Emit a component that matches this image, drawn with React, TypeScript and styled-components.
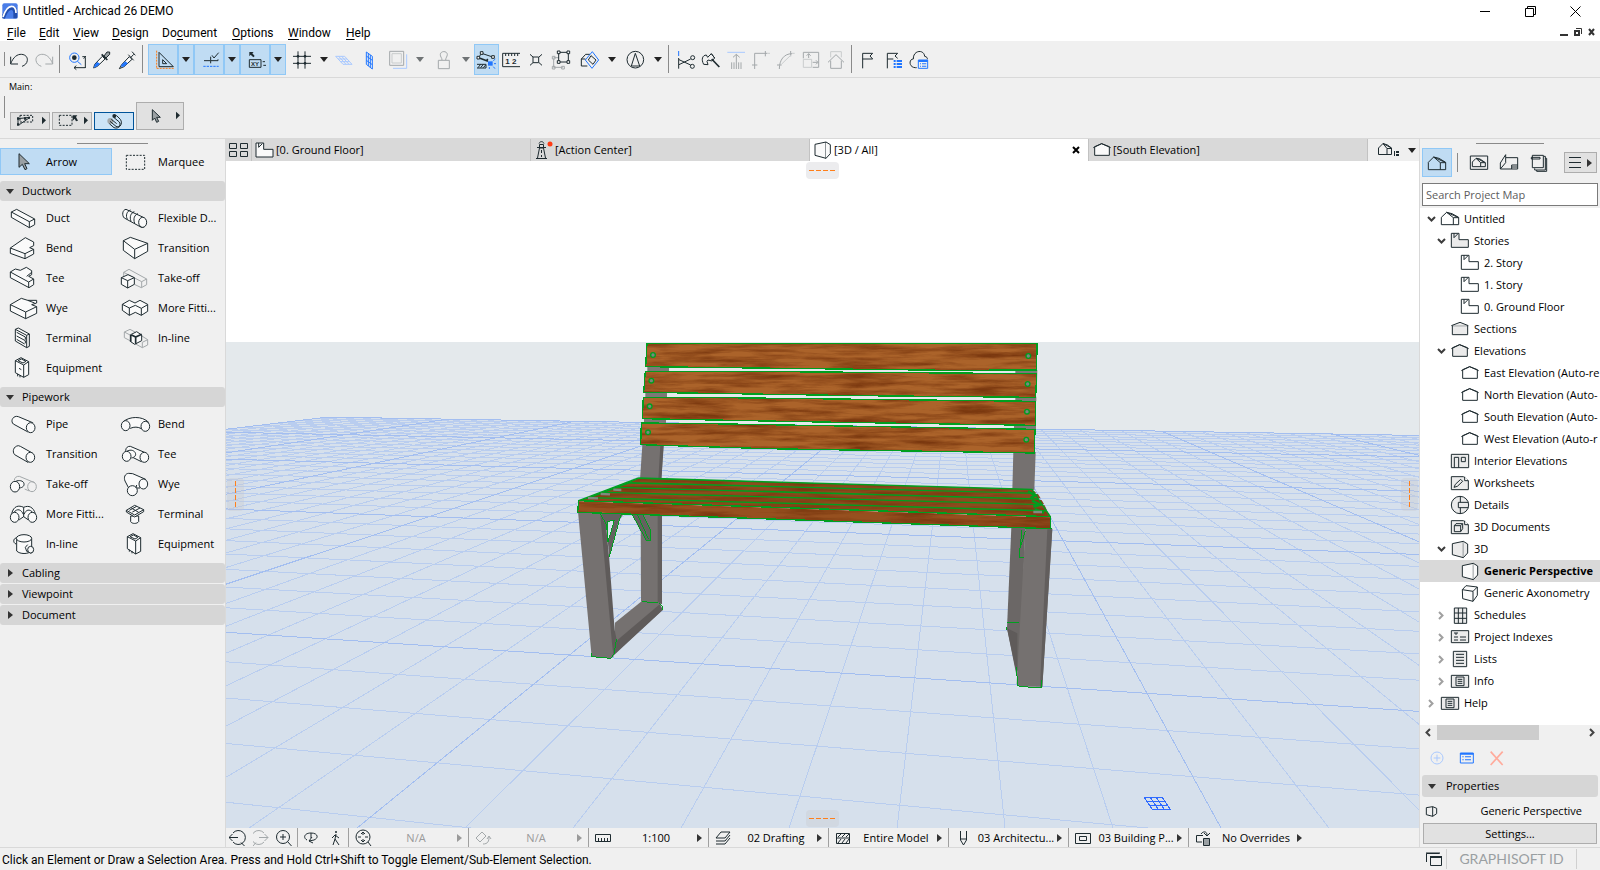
import React from "react";
import styled, { createGlobalStyle, css } from "styled-components";

const INK = "#1e2b30";
const BLUE = "#2176ff";
const GRAY = "#a3a8aa";
const PALE = "#a9c9ff";
const EDGE = "#009f1f";

const GlobalStyle = createGlobalStyle`
  *, *::before, *::after { box-sizing: border-box; }
  body { margin: 0; }
  button, input { font: inherit; color: inherit; margin: 0; }
`;

/* ---------- icon drawing ---------- */

type Stroke = [d: string, kind?: string];

const KINDS: Record<string, React.SVGProps<SVGPathElement>> = {
  k: { stroke: INK, fill: "none" },
  w: { stroke: INK, fill: "#fafafa" },
  e: { stroke: INK, fill: "#ebebeb" },
  K: { fill: INK },
  t: { stroke: INK, strokeWidth: 5, fill: "none" },
  g: { stroke: GRAY, fill: "none" },
  G: { fill: GRAY },
  l: { stroke: "#c9cccd", fill: "none" },
  b: { stroke: BLUE, fill: "none" },
  B: { fill: BLUE },
  p: { stroke: PALE, fill: "none" },
  o: { stroke: "#ff7a0f", fill: "none", strokeDasharray: "6 3" },
  d: { stroke: INK, fill: "none", strokeDasharray: "6 4" },
  D: { stroke: BLUE, fill: "none", strokeDasharray: "7 3" },
  r: { stroke: "#ffab9c", strokeWidth: 5, fill: "none" },
  c: { stroke: INK, fill: "#9aa0a3" },
};

type ArtProps = {
  at: [number, number];
  size: [number, number];
  lines: Stroke[];
  unit?: number;
  children?: React.ReactNode;
};

/* Icons are drawn on a fine grid, three units to the pixel by default. */
const Art = ({ at, size, lines, unit = 3, children }: ArtProps) => (
  <svg
    width={size[0]}
    height={size[1]}
    viewBox={`${at[0]} ${at[1]} ${size[0] * unit} ${size[1] * unit}`}
    strokeWidth={unit}
    aria-hidden="true"
  >
    {lines.map(([d, kind = "k"], i) => (
      <path key={i} d={d} {...KINDS[kind]} />
    ))}
    {children}
  </svg>
);

const disc = (x: number, y: number, rx: number, ry = rx) =>
  `M${x - rx} ${y}a${rx} ${ry} 0 1 0 ${rx * 2} 0a${rx} ${ry} 0 1 0 ${-rx * 2} 0Z`;
const box = (x: number, y: number, w: number, h: number) => `M${x} ${y}h${w}v${h}h${-w}Z`;

const Down = ({ color = "#222" }: { color?: string }) => (
  <svg width="8" height="5" viewBox="0 0 8 5" aria-hidden="true">
    <path d="M0 0h8L4 5z" fill={color} />
  </svg>
);
const Right = ({ color = "#333" }: { color?: string }) => (
  <svg width="5" height="8" viewBox="0 0 5 8" aria-hidden="true">
    <path d="M0 0v8l5-4z" fill={color} />
  </svg>
);

/* ---------- frame ---------- */

const Frame = styled.div`
  display: flex;
  flex-direction: column;
  height: 100vh;
  min-height: 640px;
  overflow: hidden;
  background: #f0f0f0;
  color: #000;
  font: 12px/16px Roboto, "Noto Sans", sans-serif;
  svg { display: block; flex: none; }
`;

const TitleBar = styled.header`
  display: flex;
  align-items: center;
  height: 22px;
  padding: 0 19px 0 2px;
  gap: 5px;
  background: #fff;
  h1 { margin: 0; flex: 1; font-size: 12px; font-weight: 400; line-height: 16px; }
`;

const WindowButtons = styled.div<{ $gap: number }>`
  display: flex;
  align-items: center;
  gap: ${(p) => p.$gap}px;
`;

const PlainButton = styled.button`
  display: flex;
  align-items: center;
  justify-content: center;
  padding: 0;
  border: 0;
  background: none;
`;

const MenuBar = styled.nav`
  display: flex;
  align-items: center;
  height: 19px;
  padding-right: 4px;
  background: #fff;
`;

const MenuItems = styled.div`
  display: flex;
  flex: 1;
`;

const MenuButton = styled(PlainButton)<{ $w: number }>`
  width: ${(p) => p.$w}px;
  padding: 4px 0 0 7px;
  justify-content: flex-start;
  line-height: 17px;
  u { text-underline-offset: 2px; }
`;

const Toolbar = styled.div`
  display: flex;
  align-items: center;
  height: 37px;
  padding-left: 4px;
  border-bottom: 1px solid #d9d9d9;
`;

const Grip = styled.span<{ $h: number }>`
  width: 1px;
  height: ${(p) => p.$h}px;
  margin-right: 1px;
  background: #8a8a8a;
`;

const Divider = styled.span<{ $l: number; $r: number; $h?: number }>`
  width: 1px;
  height: ${(p) => p.$h ?? 28}px;
  margin: 0 ${(p) => p.$r}px 0 ${(p) => p.$l}px;
  background: #8a8a8a;
`;

const active = css`
  background: #c0dcf3;
  box-shadow: inset 0 0 0 1px #90c8f6;
`;

const Tool = styled(PlainButton)<{ $on?: boolean }>`
  height: 31px;
  ${(p) => p.$on && active}
`;

const ToolArrow = styled(Tool)`
  width: 16px;
`;

const MainRow = styled.section`
  display: flex;
  flex-direction: column;
  height: 61px;
  padding: 2px 4px 0;
  border-bottom: 1px solid #d9d9d9;
  h2 { margin: 0 0 0 5px; font: 9px/14px "Open Sans", sans-serif; }
`;

const MainTools = styled.div`
  display: flex;
  align-items: flex-end;
  gap: 2px;
  height: 36px;
`;

const MainGrip = styled(Grip)`
  align-self: flex-start;
  margin: 2px 3px 0 0;
`;

const MainButton = styled(PlainButton)<{ $big?: boolean; $on?: boolean }>`
  width: ${(p) => (p.$big ? 48 : 40)}px;
  height: ${(p) => (p.$big ? 28 : 18)}px;
  border: 1px solid ${(p) => (p.$on ? "#00549a" : "#adadad")};
  background: ${(p) => (p.$on ? "#cce4f7" : "#e1e1e1")};
  svg { margin: -1px; }
`;

const Body = styled.div`
  display: flex;
  flex: 1;
  min-height: 0;
  font: 11px/16px "Open Sans", "Noto Sans", sans-serif;
`;

/* ---------- left palette ---------- */

const Toolbox = styled.aside`
  width: 226px;
  flex: none;
  padding-top: 4px;
  border-right: 1px solid #d9d9d9;
`;

const PanelGrip = styled.div<{ $w: number }>`
  width: ${(p) => p.$w}px;
  height: 1px;
  margin: 0 auto 4px;
  background: #8a8a8a;
`;

const PairGrid = styled.div<{ $top?: boolean }>`
  display: grid;
  grid-template-columns: 112px 113px;
  grid-auto-rows: ${(p) => (p.$top ? 27 : 30)}px;
  margin: ${(p) => (p.$top ? "0 0 6px" : "2px 0 4px")};
`;

const ElementButton = styled(PlainButton)<{ $on?: boolean }>`
  justify-content: flex-start;
  white-space: nowrap;
  ${(p) => p.$on && active}
`;

const GroupHeader = styled.button<{ $h?: number }>`
  display: flex;
  align-items: center;
  width: 100%;
  height: ${(p) => p.$h ?? 20}px;
  margin: 0 0 1px;
  padding: 0;
  border: 0;
  border-radius: 3px;
  background: #d6d6d6;
`;

const HeaderMark = styled.span`
  display: flex;
  justify-content: center;
  width: 20px;
  margin-right: 2px;
`;

/* ---------- centre ---------- */

const Centre = styled.main`
  display: flex;
  flex-direction: column;
  flex: 1;
  min-width: 0;
`;

const TabBar = styled.div`
  display: flex;
  height: 22px;
  flex: none;
  background: #d9d9d9;
`;

const GridTab = styled(PlainButton)`
  width: 26px;
  border-right: 1px solid #c2c2c2;
`;

const Tab = styled.button<{ $on?: boolean }>`
  display: flex;
  align-items: center;
  flex: 1;
  min-width: 0;
  padding: 0;
  border: 0;
  border-right: 1px solid #c2c2c2;
  background: ${(p) => (p.$on ? "#fff" : "#d9d9d9")};
  text-align: left;
  span { flex: 1; }
`;

const TabMore = styled(PlainButton)`
  width: 51px;
  padding-left: 6px;
  gap: 8px;
  background: #efefef;
`;

const Viewport = styled.div`
  position: relative;
  flex: 1;
  min-height: 0;
  > svg { width: 100%; height: 100%; }
`;

const Handle = styled.span<{ $side: "top" | "bottom" | "left" | "right" }>`
  position: absolute;
  display: flex;
  align-items: center;
  justify-content: center;
  border-radius: 4px;
  background: rgba(200, 200, 205, 0.35);
  ${(p) =>
    p.$side === "top" || p.$side === "bottom"
      ? css`width: 33px; height: 17px; left: 0; right: 0; margin: 0 auto; ${p.$side}: 1px;`
      : css`width: 17px; height: 33px; top: 0; bottom: 0; margin: auto 0; ${p.$side}: 1px;`}
  &::after {
    content: "";
    ${(p) =>
      p.$side === "top" || p.$side === "bottom"
        ? css`width: 27px; height: 1px; background: repeating-linear-gradient(90deg, #ff7f1a 0 5px, transparent 5px 7px);`
        : css`width: 1px; height: 27px; background: repeating-linear-gradient(180deg, #ff7f1a 0 5px, transparent 5px 7px);`}
  }
`;

const ViewBar = styled.div`
  display: flex;
  height: 19px;
  flex: none;
`;

const ViewCell = styled.div<{ $w: number }>`
  display: flex;
  align-items: center;
  width: ${(p) => p.$w}px;
  border-right: 1px solid #a0a0a0;
`;

const ViewButton = styled(PlainButton)`
  flex: 1;
  height: 19px;
`;

const Option = styled(PlainButton)<{ $off?: boolean }>`
  width: 120px;
  height: 19px;
  justify-content: flex-start;
  padding-left: 5px;
  border-right: 1px solid #a0a0a0;
  color: ${(p) => (p.$off ? "#9a9a9a" : "#000")};
  white-space: nowrap;
  &:last-child { border-right: 0; }
  span { width: 82px; margin-left: 3px; text-align: center; }
`;

/* ---------- navigator ---------- */

const Navigator = styled.aside`
  display: flex;
  flex-direction: column;
  width: 181px;
  flex: none;
  padding-top: 4px;
  border-left: 1px solid #d9d9d9;
`;

const NavTools = styled.div`
  display: flex;
  align-items: center;
  height: 29px;
  margin-bottom: 6px;
  padding: 0 3px 0 2px;
`;

const NavTool = styled(PlainButton)<{ $on?: boolean }>`
  height: 29px;
  ${(p) => p.$on && active}
`;

const NavMenu = styled(PlainButton)`
  width: 33px;
  height: 21px;
  margin-left: auto;
  gap: 6px;
  border: 1px solid #adadad;
  background: #e1e1e1;
`;

const SearchBox = styled.input`
  height: 23px;
  margin: 0 2px 2px;
  padding: 0 3px;
  border: 1px solid #7a7a7a;
  border-radius: 0;
  background: #fff;
  outline: 0;
  &::placeholder { color: #5c5c5c; opacity: 1; }
`;

const Tree = styled.ul`
  flex: 1;
  margin: 0;
  padding: 0;
  min-height: 0;
  overflow: hidden;
  background: #fff;
  list-style: none;
`;

const TreeRow = styled.li<{ $level: number; $on?: boolean }>`
  display: flex;
  align-items: center;
  height: 22px;
  padding-left: ${(p) => 4 + p.$level * 10}px;
  white-space: nowrap;
  background: ${(p) => (p.$on ? "#d9d9d9" : "none")};
  font-weight: ${(p) => (p.$on ? 700 : 400)};
`;

const Expander = styled.span`
  display: flex;
  flex: none;
  justify-content: center;
  width: 14px;
  margin-right: 2px;
`;

const TreeLabel = styled.span`
  margin-left: 2px;
`;

const ScrollTrack = styled.div`
  display: flex;
  align-items: center;
  height: 15px;
  padding: 0 5px;
  justify-content: space-between;
`;

const ScrollThumb = styled.span`
  height: 15px;
  width: 102px;
  margin-right: auto;
  margin-left: 6px;
  background: #cdcdcd;
`;

const NavActions = styled.div`
  display: flex;
  align-items: center;
  height: 35px;
  padding: 0 2px;
`;

const PropertyHeader = styled(GroupHeader)`
  width: auto;
  margin: 0 2px;
`;

const PropertyRow = styled.div`
  display: flex;
  align-items: center;
  justify-content: space-between;
  height: 26px;
  padding: 2px 18px 0 2px;
`;

const SettingsButton = styled.button`
  height: 21px;
  margin: 0 3px 3px;
  padding: 0;
  border: 1px solid #adadad;
  background: #e1e1e1;
`;

/* ---------- status ---------- */

const StatusBar = styled.footer`
  display: flex;
  align-items: center;
  height: 23px;
  flex: none;
  padding-left: 2px;
  border-top: 1px solid #d9d9d9;
  p { flex: 1; margin: 2px 0 0; white-space: nowrap; }
`;

const Brand = styled.span`
  display: flex;
  align-items: center;
  justify-content: center;
  width: 131px;
  height: 20px;
  margin: 0 23px 0 4px;
  border: solid #d0d0d0;
  border-width: 0 1px;
  color: #9a9fa2;
  font: 14px/20px Lato, sans-serif;
`;

/* ---------- toolbar data ---------- */

const undo: Stroke[] = [["M32 170V192H54"], ["M32 191C40 171 52 162 65 163c12 1 18 9 17 18c-1 9-7 15-16 18"]];
const redo: Stroke[] = [["M158 170V192H136", "g"], ["M158 191C150 171 138 162 125 163c-12 1-18 9-17 18c1 9 7 15 16 18", "g"]];
const find: Stroke[] = [
  [disc(223, 173, 14), "b"], [disc(223, 173, 7), "K"], ["M232 184l12 10", "b"],
  ["M256 204V172M247 170h11M251 176l6-7"], ["M256 203H222M229 197l-7 6l7 6"],
];
const pick: Stroke[] = [
  ["M281 204L284 193L307 169L315 177L292 199Z", "w"], ["M281 204L285 193L292 186L300 191L292 199Z", "B"],
  ["M312 168L321 156L329 156L329 163L318 174Z", "c"], ["M305 163L322 180", "t"],
];
const inject: Stroke[] = [
  ["M358 206L365 194L388 170L396 178L372 200Z", "w"], ["M362 200L366 193L376 184L383 190L372 200Z", "B"],
  ["M392 173L401 163M385 164L401 181M396 155L406 166"],
];
const setSquare: Stroke[] = [["M470 152V205", "o"], ["M470 205H524", "o"], ["M477 157V200H520Z"], ["M488 179V191H500Z"]];
const snap: Stroke[] = [["M612 182H630M632 170V190M632 182H654V178"], ["M636 166L642 174L656 158"], ["M610 199H656", "D"]];
const coords: Stroke[] = [["M748 156H761L757 160L764 168L760 172L752 164L748 169Z", "K"], [box(748, 179, 35, 23)], ["M788 185h7M790 196h8"]];
const gridTool: Stroke[] = [
  ["M879 169H933M879 190H933M894 154V206M915 154V206"],
  [disc(894, 169, 4), "K"], [disc(915, 169, 4), "K"], [disc(894, 190, 4), "K"], [disc(915, 190, 4), "K"],
];
const plane: Stroke[] = [["M1007 169H1034L1056 193H1029Z", "p"], ["M1016 169l22 24M1025 169l22 24M1014 177h27M1021 185h27", "p"]];
const wall: Stroke[] = [["M1099 156L1117 169V207L1099 193Z", "b"], ["M1105 160v38M1111 165v37M1099 168l18 13M1099 181l18 13", "b"]];
const trace: Stroke[] = [["M1220 163V205H1179", "p"], [box(1169, 154, 42, 42), "g"], [box(1176, 161, 28, 28), "l"]];
const weight: Stroke[] = [[box(1315, 181, 33, 25), "g"], ["M1326 180C1326 173 1320 170 1321 163C1322 152 1341 152 1342 163C1342 170 1337 173 1337 180", "g"]];
const suspend: Stroke[] = [
  ["M5 160L38 171M5 160L-4 172"], [box(1, 155, 8, 8), "w"], [box(35, 167, 8, 8), "w"], [box(-9, 169, 8, 8), "w"],
  ["M-9 193H18V204H-9M-6 203L2 193M2 203L10 193M10 203L17 195"], ["M0 175L24 184M24 180L20 178", "t"], [box(24, 184, 14, 13), "B"],
  ["M40 182l6-5M42 191h6M40 200l5 6M28 201v6", "b"],
];
const ruler: Stroke[] = [["M120 160H68V200H120"], ["M77 160v8M86 160v8M95 160v8M104 160v8M113 160v8"]];
const explode: Stroke[] = [[box(159, 171, 17, 17)], ["M150 163l9 8M186 163l-9 8M150 196l9-8M186 196l-9-8"]];
const group: Stroke[] = [
  ["M221 176V202H248M221 173H236", "g"], [box(217, 169, 8, 8), "g"], [box(217, 199, 8, 8), "g"], [box(245, 199, 8, 8), "g"],
  [box(236, 157, 29, 29)], [box(232, 153, 8, 8), "w"], [box(261, 153, 8, 8), "w"], [box(232, 182, 8, 8), "w"], [box(261, 182, 8, 8), "w"],
];
const cube: Stroke[] = [["M322 198H304V177L317 163H330"], ["M337 155L356 180L336 205L316 180Z", "b"], ["M304 177H316"], ["M333 167L348 180L339 193L325 180Z"]];
const compass: Stroke[] = [[disc(466, 179, 25)], ["M454 198L466 160L479 198Z"]];
const split: Stroke[] = [["M596 153V168", "b"], ["M596 174V206"], ["M597 179L632 195M597 194L632 177"], [disc(638, 173, 6)], [disc(637, 199, 6)]];
const axe: Stroke[] = [["M671 193C663 178 667 166 679 165L683 172L694 161L704 174L696 183L684 180L681 184L684 194Z"], ["M694 161L704 174"], ["M695 177L718 201", "t"]];
const lift: Stroke[] = [["M742 157H795", "p"], ["M769 207V163M759 172l10-9l10 9M755 187v20M762 187v20M776 187v20M783 187v20", "g"]];
const corner: Stroke[] = [["M824 207V160H862M856 153v16M816 195h16", "g"], ["M862 160h8", "l"]];
const fillet: Stroke[] = [["M898 207C898 180 912 161 936 161M932 153v16M891 195h14", "g"], ["M904 193L934 164M936 160h8", "l"]];
const resize: Stroke[] = [["M970 175V157H1016V202H998", "g"], [box(970, 178, 25, 24), "l"], ["M986 174V161M980 167l6-6l6 6M998 187h15M1008 181l6 6l-6 6", "g"]];
const homeTool: Stroke[] = [["M1044 187L1068 164L1092 187M1052 182V205H1084V182", "g"], ["M1052 172V155H1084V172", "l"]];
const flag: Stroke[] = [["M1148 205V160H1178L1170 168L1178 177H1148"]];
const flagList: Stroke[] = [["M1222 205V160H1253L1245 168L1253 175M1222 177H1240"], [box(1241, 180, 6, 6) + box(1250, 180, 16, 6) + box(1241, 189, 6, 6) + box(1250, 189, 16, 6) + box(1241, 198, 6, 6) + box(1250, 198, 16, 6), "B"]];
const cloud: Stroke[] = [["M1310 203H1306C1286 202 1286 177 1300 177C1299 150 1332 147 1334 169C1340 170 1343 174 1342 178"], [box(1315, 180, 28, 25), "b"], [box(1315, 180, 28, 6) + box(1320, 190, 3, 3) + box(1326, 190, 13, 3) + box(1320, 197, 3, 3) + box(1326, 197, 13, 3), "B"]];

type ToolSpec = { name: string; x: number; art: Stroke[]; menu?: boolean; on?: boolean; dim?: boolean; label?: [number, number, string, number] };
const SEP = "sep";

const TOOLS: (ToolSpec | typeof SEP)[] = [
  { name: "Undo", x: 18, art: undo },
  { name: "Redo", x: 93, art: redo },
  SEP,
  { name: "Find and select", x: 192, art: find },
  { name: "Pick up parameters", x: 267, art: pick },
  { name: "Inject parameters", x: 342, art: inject },
  SEP,
  { name: "Guide lines", x: 444, art: setSquare, menu: true, on: true },
  { name: "Snap guides", x: 582, art: snap, menu: true, on: true },
  { name: "Tracker", x: 720, art: coords, menu: true, on: true, label: [753, 197, "XY", 18] },
  { name: "Grid snap", x: 858, art: gridTool, menu: true },
  { name: "Editing plane", x: 996, art: plane },
  { name: "Vertical plane", x: 1071, art: wall },
  { name: "Trace", x: 1146, art: trace, menu: true, dim: true },
  { name: "Gravity", x: 1284, art: weight, menu: true, dim: true },
  { name: "Suspend groups", x: -18, art: suspend, on: true },
  { name: "Measure", x: 57, art: ruler, label: [76, 193, "1 2", 24] },
  { name: "Explode", x: 132, art: explode },
  { name: "Group", x: 207, art: group },
  { name: "3D cutaway", x: 282, art: cube, menu: true },
  { name: "Orientation", x: 420, art: compass, menu: true },
  SEP,
  { name: "Split", x: 582, art: split },
  { name: "Adjust", x: 657, art: axe },
  { name: "Elevate", x: 732, art: lift },
  { name: "Intersect", x: 807, art: corner },
  { name: "Fillet", x: 882, art: fillet },
  { name: "Resize", x: 957, art: resize },
  { name: "Trim to roof", x: 1032, art: homeTool },
  SEP,
  { name: "Mark up", x: 1128, art: flag },
  { name: "Issue list", x: 1203, art: flagList },
  { name: "Cloud", x: 1278, art: cloud },
];

const cursorArt: Stroke[] = [["M57 56V97L67 88L75 104L81 101L74 86L88 86Z", "c"]];

/* ---------- palette data ---------- */

type Element = { name: string; art: Stroke[] };

const DUCTS: Element[] = [
  { name: "Duct", art: [["M34 231L50 223L104 252V269L88 278L34 247Z", "w"], ["M34 231L88 260L104 252M88 260V278"]] },
  { name: "Flexible D...", art: [["M378 223C367 224 365 242 373 249L424 277C440 279 443 252 430 247Z", "w"], [disc(428, 262, 12, 15), "w"], ["M392 225C381 228 376 241 382 253M403 230C392 234 388 246 393 259M414 236C403 240 399 251 404 265"]] },
  { name: "Bend", art: [["M31 339L76 308L101 321V332L89 338L101 343V357L75 371L31 355Z", "w"], ["M31 339L75 356L101 343M75 356V371"]] },
  { name: "Transition", art: [["M370 317L391 307L443 325V349L404 371L370 346Z", "w"], ["M370 317L404 343L443 325M404 343V371"]] },
  { name: "Tee", art: [["M31 411L46 402L61 406L79 397L95 407V419L86 424L101 432V449L87 458L31 428Z", "w"], ["M31 411L86 441L101 432M86 441V458M80 424L95 412"]] },
  { name: "Take-off", art: [["M371 425V412L387 403L440 432V449L424 458L403 448M371 412L425 440L440 432M425 440V458", "g"], ["M364 428L384 419L403 428V448L383 459L364 448Z", "w"], ["M364 428L383 437L403 428M383 437V459"]] },
  { name: "Wye", art: [["M31 509L64 490L83 496L110 496V504L95 509L110 515V535L77 551L31 528Z", "w"], ["M31 509L77 531L110 515M77 531V551M83 496L104 504"]] },
  { name: "More Fitti...", art: [["M367 508L388 496L405 504L420 496L443 508V529L424 541L406 532L388 541L367 526Z", "w"], ["M367 508L388 519L406 511L424 520L443 509M388 519V541M424 520V541"]] },
  { name: "Terminal", art: [["M46 583L55 579L88 597V634L80 638L46 618Z", "w"], ["M46 583L80 601V638M80 601L88 597M50 592L76 606V614M50 603L76 617V625M50 613L74 627"]] },
  { name: "In-line", art: [["M373 591L390 583L410 594M373 591V608L392 618M373 591L392 601M424 602L443 614V630L427 638L405 626M427 638V622L443 614", "g"], ["M392 599L410 590L425 600V617L404 628L392 620Z", "w"], ["M392 599V620M395 600L407 606L425 598M407 606V626", "t"]] },
  { name: "Equipment", art: [["M46 677L63 668L86 680V719L71 727L46 713Z", "w"], ["M46 677L71 690L86 680M71 690V727M54 677L64 672L78 679L69 684ZM57 700L64 704M53 717V724M60 720V727"]] },
];

const PIPES: Element[] = [
  { name: "Pipe", art: [["M50 94C36 95 32 110 40 117L84 141L98 113L55 95Z", "w"], [disc(92, 128, 13, 15), "w"]] },
  { name: "Bend", art: [["M370 110C388 94 426 92 446 112L424 131C414 125 402 125 391 130Z", "w"], [disc(377, 122, 13, 15), "w"], [disc(436, 124, 13, 15), "w"]] },
  { name: "Transition", art: [["M55 182C40 184 36 200 44 209L84 232L97 204L61 184Z", "w"], [disc(91, 217, 13, 15), "w"]] },
  { name: "Tee", art: [["M377 197C377 188 384 183 391 184L438 204L424 230L400 218Z", "w"], ["M380 199C388 194 400 194 405 202C410 210 405 217 394 219", "w"], [disc(380, 214, 13, 15), "w"], [disc(433, 217, 13, 15), "w"]] },
  { name: "Take-off", art: [["M43 286C43 278 50 273 58 274L104 293M88 318L74 312", "g"], [disc(96, 305, 13, 15), "g"], ["M44 291C52 285 66 285 71 293C75 302 68 308 58 309", "w"], [disc(45, 305, 14, 16), "w"]] },
  { name: "Wye", art: [["M386 265C374 266 371 278 375 288L386 309L410 309L420 309L437 283L398 266Z", "w"], [disc(430, 297, 13, 15), "w"], [disc(397, 317, 15, 15), "w"], ["M408 308L410 300"]] },
  { name: "More Fitti...", art: [["M35 386C41 362 56 360 71 367C86 360 100 366 106 386L84 404L71 395L58 404Z", "w"], ["M71 367V396M41 383C52 368 64 374 70 388M72 388C78 374 88 370 100 384"], [disc(44, 397, 13, 15), "w"], [disc(97, 397, 13, 15), "w"]] },
  { name: "Terminal", art: [["M392 393V410C396 417 411 417 416 410V393Z", "w"], ["M379 376L404 361L431 374V380L404 396L379 381Z", "w"], ["M379 376L404 390L431 374M388 376L410 364M397 381L420 369M394 369L416 382"]] },
  { name: "In-line", art: [["M48 459C39 461 39 474 48 477", "w"], ["M50 461V498C60 508 84 508 95 498V461Z", "w"], [disc(72, 460, 23, 11), "w"], ["M83 479L76 487L80 499L94 505", "w"], [disc(92, 494, 9, 10), "w"]] },
  { name: "Equipment", art: [["M382 455L399 446L422 458V499L407 507L382 491Z", "w"], ["M382 455L407 468L422 458M407 468V507M390 455L400 450L414 457L405 462ZM388 494V500M396 498V505"]] },
];

/* ---------- navigator data ---------- */

const houseArt: Stroke[] = [["M334 674V652L350 637L366 641L386 652V674Z"], ["M350 637L370 653M370 674V653H386M350 637L384 652"]];
const page = (kind: string): Stroke[] => [["M394 766H417V785H445V808H394Z", kind], ["M402 766V779L413 768"]];
const gable = (kind: string): Stroke[] => [["M188 119V145H232V119L209 110Z", kind], ["M184 122L209 110L236 122"]];
const persp = (kind: string): Stroke[] => [["M157 641L190 634V683L157 674Z", kind], ["M190 634L203 642V669L190 683", kind]];

type Node = { label: string; level: number; open?: boolean; closed?: boolean; on?: boolean; at: [number, number]; art: Stroke[] };

const NODES: Node[] = [
  { label: "Untitled", level: 0, open: true, at: [330, 624], art: houseArt },
  { label: "Stories", level: 1, open: true, at: [390, 756], art: page("e") },
  { label: "2. Story", level: 2, at: [390, 756], art: page("k") },
  { label: "1. Story", level: 2, at: [390, 756], art: page("k") },
  { label: "0. Ground Floor", level: 2, at: [390, 756], art: page("k") },
  { label: "Sections", level: 1, at: [360, 954], art: [[box(367, 977, 46, 27), "e"], ["M364 977L390 967L415 977", "e"]] },
  { label: "Elevations", level: 1, open: true, at: [180, 96], art: gable("e") },
  { label: "East Elevation (Auto-re", level: 2, at: [180, 96], art: gable("k") },
  { label: "North Elevation (Auto-", level: 2, at: [180, 96], art: gable("k") },
  { label: "South Elevation (Auto-", level: 2, at: [180, 96], art: gable("k") },
  { label: "West Elevation (Auto-r", level: 2, at: [180, 96], art: gable("k") },
  { label: "Interior Elevations", level: 1, at: [150, 360], art: [[box(154, 373, 52, 40), "e"], ["M163 413V382H176V413"], [box(184, 382, 12, 13)]] },
  { label: "Worksheets", level: 1, at: [150, 426], art: [["M154 440H190L205 452V479H154Z", "e"], ["M194 440V452H205", "w"], ["M162 472L166 463L182 448L188 454L172 469Z"]] },
  { label: "Details", level: 1, at: [150, 492], art: [[disc(180, 525, 26), "e"], ["M181 499V517M181 533V551M175 517H205M175 533H205M175 517V533"]] },
  { label: "3D Documents", level: 1, at: [150, 558], art: [["M154 572H190L205 584V611H154Z", "e"], ["M194 572V584H205", "w"], ["M163 587L168 581H188V596L182 605H163ZM163 587H182L188 581M182 587V605"]] },
  { label: "3D", level: 1, open: true, at: [150, 624], art: persp("e") },
  { label: "Generic Perspective", level: 2, on: true, at: [150, 624], art: persp("w") },
  { label: "Generic Axonometry", level: 2, at: [180, 756], art: [["M187 779L198 767L232 771V796L219 814L188 806Z", "w"], ["M187 779L219 784L232 771M219 784V814"]] },
  { label: "Schedules", level: 1, closed: true, at: [150, 822], art: [[box(163, 834, 37, 46), "e"], ["M175 834V880M188 834V880M163 849H200M163 865H200"]] },
  { label: "Project Indexes", level: 1, closed: true, at: [150, 888], art: [[box(154, 902, 52, 36), "e"], ["M162 909H174M168 909V915M162 921H174M180 921H198M162 930H174M180 930H198"]] },
  { label: "Lists", level: 1, closed: true, at: [150, 954], art: [[box(160, 964, 40, 46), "e"], ["M168 973H192M168 982H192M168 991H192M168 1000H192"]] },
  { label: "Info", level: 1, closed: true, at: [150, 1020], art: [[box(154, 1036, 52, 36), "e"], [box(168, 1041, 24, 26)], ["M173 1048H187M173 1054H187M173 1060H187"]] },
  { label: "Help", level: 0, closed: true, at: [150, 1020], art: [[box(154, 1036, 52, 36), "e"], [box(168, 1041, 24, 26)], ["M173 1048H187M173 1054H187M173 1060H187"]] },
];

/* ---------- 3D scene ---------- */

const HORIZON = 342;
const FLOOR = 828;
const VX = 954;
const LVX = -4150;
const depth = (k: number) => 1 / (0.003445 + 0.000318 * k);
const rowY = (k: number, x: number) => HORIZON + (depth(k) * (x - LVX)) / 4376;
const columnX = (i: number, y: number) => VX + ((357 + 108 * i - VX) * (y - HORIZON)) / (FLOOR - HORIZON);

/* The point where a grid column meets a grid row. */
const cross = (i: number, k: number): [number, number] => {
  const slope = (357 + 108 * i - VX) / (FLOOR - HORIZON);
  const m = depth(k) / 4376;
  const t = (m * (VX - LVX)) / (1 - m * slope);
  return [VX + slope * t, HORIZON + t];
};

const gridPath = (major: boolean) => {
  let d = "";
  for (let i = -32; i <= 48; i++) {
    if ((i % 8 === 0) !== major) continue;
    const [x, y] = cross(i, 32);
    d += `M${x.toFixed(1)} ${y.toFixed(1)}L${columnX(i, 900).toFixed(1)} 900`;
  }
  for (let k = -4; k <= 32; k++) {
    if ((k % 8 === 0) !== major) continue;
    const [x, y] = cross(-32, k);
    d += `M${x.toFixed(1)} ${y.toFixed(1)}L1600 ${rowY(k, 1600).toFixed(1)}`;
  }
  return d;
};

const MINOR = gridPath(false);
const MAJOR = gridPath(true);
const FAR = cross(-32, 32);

const SLATS = [
  "261,40 1431,40 1430,120 1165,121 257,110",
  "256,124 525,124 1430,131 1427,202 900,197 251,187",
  "250,202 490,203 1427,214 1426,286 780,276 247,266",
  "244,279 445,281 1425,298 1423,369 620,356 242,344",
];
const SEAT = ["236,447 1416,480 1430,488 214,456", "208,461 1434,492 1442,505 180,470", "174,475 1444,510 1452,522 140,485", "134,489 1454,526 1460,540 100,501", "92,505 1462,545 1471,560 56,512"];

const Bench = () => (
  <g transform="translate(560 330) scale(0.33333)">
    <g fill="#757170">
      <path d="M262 110h65v14h-65zM256 186h65v18h-65zM252 264h66v18h-66z" fill="#7d7977" />
      <path d="M1366 120h66l-1 40h-65zM1366 200h63v14h-63zM1362 284h66v14h-66z" fill="#7d7977" />
      <path d="M247 344H311L304 450H240Z" /><path d="M301 344H311L304 450H295Z" fill="#5f5b5a" />
      <path d="M1360 366H1427L1423 480H1357Z" />
      <path d="M242 550H306V822L243 815Z" /><path d="M293 550H306V822L293 817Z" fill="#635f5e" />
      <path d="M165 878L243 815L296 817L308 840L160 975Z" />
      <path d="M168 934L300 822L308 840L160 977Z" fill="#5f5b5a" />
      <path d="M122 550H192L176 573L148 680L140 600Z" fill="#656160" />
      <path d="M144 574L163 572L144 636Z" fill="#d6e0ec" />
      <path d="M215 552H247L272 600V633H258Z" fill="#656160" />
      <path d="M118 547L138 585L148 690L164 900L170 930L160 980L150 985Z" fill="#5f5b5a" />
      <path d="M54 545H120L156 940L160 975L153 985L95 980Z" />
      <path d="M1354 592H1396L1380 1010L1368 1030L1341 895Z" fill="#6b6766" />
      <path d="M1396 596H1477L1447 1070L1380 1070L1370 1060Z" />
      <path d="M1462 598H1477L1447 1070H1440Z" fill="#625e5d" />
      <path d="M1341 895L1372 910V1040Z" fill="#5f5b5a" />
    </g>
    <g stroke={EDGE} strokeWidth="3" fill="none" shapeRendering="crispEdges">
      <path d="M120 550L138 582L140 600M182 556L148 680M163 570L144 636V574L163 570M217 554L260 633H272V601L250 556M232 554L266 628" />
      <path d="M245 815L295 818L307 830V840M170 926L162 972L153 985L96 980V968" />
      <path d="M1386 600L1377 682H1391M1396 602L1382 650M1342 877H1378M1340 900V890M1370 1010L1372 1066L1380 1070L1446 1073V1050M1396 597H1477" />
    </g>
    {SLATS.map((points) => (
      <g key={points}>
        <polygon points={points} fill="#ab632a" filter="url(#grain)" />
        <polygon points={points} fill="none" stroke={EDGE} strokeWidth="4" shapeRendering="crispEdges" />
      </g>
    ))}
    <polygon points="236,444 1416,478 1471,560 56,512" fill={EDGE} />
    {SEAT.map((points) => (
      <polygon key={points} points={points} fill="#8c4c1e" filter="url(#grain)" />
    ))}
    <path d="M236 444L1416 478L1471 560M56 512L236 444" stroke={EDGE} strokeWidth="4" fill="none" />
    <polygon points="56,514 1471,562 1471,596 53,546" fill="#96501f" filter="url(#grain)" />
    <path d="M56 512L53 547L1471 596V560Z" fill="none" stroke={EDGE} strokeWidth="4" shapeRendering="crispEdges" />
    <path d="M1404 484l22 12-14 8M1416 512l24 12-20 6M1424 538l28 10" stroke={EDGE} strokeWidth="8" fill="none" />
    <path d="M84 504l30 1M122 492l28 1M160 479l24 1M1420 546h26" stroke="#7f8a80" strokeWidth="7" />
    {[[279, 75], [274, 152], [269, 229], [264, 307], [1405, 78], [1403, 162], [1401, 245], [1399, 329]].map(([x, y]) => (
      <circle key={`${x}-${y}`} cx={x} cy={y} r="7" fill="#7d8580" stroke={EDGE} strokeWidth="4" />
    ))}
  </g>
);

const Scene = () => (
  <svg viewBox="226 161 1193 667" preserveAspectRatio="xMidYMid slice" role="img" aria-label="Perspective view of a bench">
    <defs>
      <filter id="grain" x="0" y="0" width="100%" height="100%" colorInterpolationFilters="sRGB">
        <feTurbulence type="fractalNoise" baseFrequency="0.006 0.06" numOctaves="5" seed="8" result="noise" />
        <feColorMatrix in="noise" values="0 0 0 0 0.48  0 0 0 0 0.22  0 0 0 0 0.06  2.2 0 0 0 -0.8" result="dark" />
        <feComposite in="dark" in2="SourceGraphic" operator="in" result="streaks" />
        <feMerge>
          <feMergeNode in="SourceGraphic" />
          <feMergeNode in="streaks" />
        </feMerge>
      </filter>
    </defs>
    <rect x="0" y="0" width="1800" height={HORIZON} fill="#fff" />
    <rect x="0" y={HORIZON} width="1800" height="700" fill="#e4e9ec" />
    <path d={`M${FAR[0]} ${FAR[1]}L1600 ${rowY(32, 1600)}V900H-400V${FAR[1] + 90}Z`} fill="#d6e0ec" />
    <g fill="none" shapeRendering="crispEdges">
      <path d={MINOR} stroke="#b9cdef" />
      <path d={MAJOR} stroke="#a3bef0" />
    </g>
    <Bench />
    <path
      d="M1144 797h18l8 12h-18zM1150 797l8 12M1156 797l8 12M1147 801h18M1150 805h17"
      fill="none"
      stroke="#2f6bff"
      shapeRendering="crispEdges"
    />
  </svg>
);

/* ---------- view bar data ---------- */

type Small = { name: string; art: Stroke[] };

const NAV1: Small[] = [
  { name: "Previous zoom", art: [["M5 4A7 7 0 1 1 5 13M1 8.500H10M4.500 5L1 8.500L4.500 12M13 13.500L16.500 17"]] },
  { name: "Next zoom", art: [["M12 4A7 7 0 1 0 12 13M7 8.500H16M12.500 5L16 8.500L12.500 12M4 13.500L1 17", "g"]] },
  { name: "Zoom in", art: [[disc(8, 8, 6.5)], ["M5 8h6M8 5v6M12.500 12.500L16.500 17"]] },
];
const NAV2: Small[] = [
  { name: "Orbit", art: [["M5 11C1 9 2 4 9 4S17 9 12 11L7 12M10 8L7 12L11 14M9 4V9"]] },
  { name: "Walk", art: [["M9 5L8 10L6 16M8 10L12 16M5 9L8 6L12 9"], [disc(9, 3, 1), "K"]] },
];
const OPTIONS: { text: string; off?: boolean; art: Stroke[] }[] = [
  { text: "N/A", off: true, art: [[disc(9, 8, 7)], ["M9 3V6M9 10V13M4 8H7M11 8H14M14 13L17 17M7 5L9 3L11 5M7 11L9 13L11 11"]] },
  { text: "N/A", off: true, art: [["M2 9L8 3L12 7L6 13ZM9 15C14 15 15 12 15 8M13 10L15 7L17 10", "g"]] },
  { text: "1:100", art: [[box(1.5, 5.5, 15, 7)], ["M4.500 12V9M7.500 12V9M10.500 12V9M13.500 12V9"]] },
  { text: "02 Drafting", art: [["M2 9L7 3H16L11 9ZM2 12H11L16 6M2 15H11L16 9"]] },
  { text: "Entire Model", art: [[box(2.5, 4.5, 13, 10)], ["M3 9H15M4 8L7 5M8 8L11 5M12 8L15 5M4 14L7 10M8 14L11 10M12 14L15 10"]] },
  { text: "03 Architectu...", art: [["M6.500 2V11L9.500 16L12.500 11V2M6.500 10H12.500"]] },
  { text: "03 Building P...", art: [[box(1.5, 4.5, 15, 10)], [box(5.5, 7.5, 7, 4)]] },
  { text: "No Overrides", art: [["M8 13H2.500V6.500H9M7 5C9 2 13 2 13 6M10 4L13 7L16 4"], [box(9.5, 9.5, 6, 7), "c"]] },
];

/* ---------- pieces ---------- */

const MENUS: [string, string, string, number][] = [
  ["", "F", "ile", 32], ["", "E", "dit", 34], ["", "V", "iew", 39], ["", "D", "esign", 50],
  ["Do", "c", "ument", 70], ["", "O", "ptions", 56], ["", "W", "indow", 58], ["", "H", "elp", 40],
];

const ToolItem = ({ spec }: { spec: ToolSpec }) => (
  <>
    <Tool type="button" $on={spec.on} aria-label={spec.name}>
      <Art at={[spec.x, 132]} size={[spec.menu ? 30 : 25, 31]} lines={spec.art}>
        {spec.label && (
          <text x={spec.label[0]} y={spec.label[1]} fontSize={spec.label[3]} fontFamily="Liberation Sans, sans-serif" fontWeight="700" fill={INK}>
            {spec.label[2]}
          </text>
        )}
      </Art>
    </Tool>
    {spec.menu && (
      <ToolArrow type="button" $on={spec.on} aria-label={`${spec.name} options`}>
        <Down color={spec.dim ? "#6f7375" : "#222"} />
      </ToolArrow>
    )}
  </>
);

const ElementGroup = ({ title, items, top }: { title: string; items: Element[]; top: number }) => (
  <>
    <GroupHeader type="button" aria-expanded="true">
      <HeaderMark><Down color="#333" /></HeaderMark>
      {title}
    </GroupHeader>
    <PairGrid>
      {items.map((item, i) => (
        <ElementButton type="button" key={item.name}>
          <Art at={[i % 2 ? 336 : 0, top + Math.floor(i / 2) * 90]} size={[46, 30]} lines={item.art} />
          {item.name}
        </ElementButton>
      ))}
    </PairGrid>
  </>
);

const App = () => (
  <Frame>
    <GlobalStyle />
    <TitleBar>
      <svg width="16" height="16" viewBox="0 0 48 48" aria-hidden="true">
        <rect x="1" y="1" width="46" height="46" rx="6" fill="#4a7de8" />
        <path d="M1 46V36C10 17 20 8 31 8c10 0 15 8 15 24v14H34V32c0-8-2-11-6-11C20 21 15 32 9 47z" fill="#234fae" />
        <path d="M3 42C10 20 20 10 29 10c9 0 13 6 13 20" fill="none" stroke="#fff" strokeWidth="5" />
      </svg>
      <h1>Untitled - Archicad 26 DEMO</h1>
      <WindowButtons $gap={34}>
        <PlainButton type="button" aria-label="Minimize"><svg width="11" height="11" viewBox="0 0 11 11"><path d="M0 5.500h10" stroke="#000" /></svg></PlainButton>
        <PlainButton type="button" aria-label="Restore"><svg width="11" height="11" viewBox="0 0 11 11"><path d="M.5 2.500h8v8h-8zM2.500 2V.5h8v8H9" fill="none" stroke="#000" /></svg></PlainButton>
        <PlainButton type="button" aria-label="Close"><svg width="11" height="11" viewBox="0 0 11 11"><path d="M.5.5l10 10M10.500.5l-10 10" stroke="#000" /></svg></PlainButton>
      </WindowButtons>
    </TitleBar>
    <MenuBar aria-label="Main menu">
      <MenuItems>
        {MENUS.map(([before, key, after, w]) => (
          <MenuButton type="button" key={key + after} $w={w}><span>{before}<u>{key}</u>{after}</span></MenuButton>
        ))}
      </MenuItems>
      <WindowButtons $gap={6}>
        <PlainButton type="button" aria-label="Minimize view"><svg width="8" height="8" viewBox="0 0 8 8"><path d="M0 6h8v2H0z" fill="#333" /></svg></PlainButton>
        <PlainButton type="button" aria-label="Restore view"><svg width="8" height="8" viewBox="0 0 8 8"><path d="M1 3h4v4H1z" fill="none" stroke="#333" strokeWidth="2" /><path d="M2 .5h5.500V6" fill="none" stroke="#333" /></svg></PlainButton>
        <PlainButton type="button" aria-label="Close view"><svg width="8" height="8" viewBox="0 0 8 8"><path d="M1 1l5 6M6 1L1 7" stroke="#333" strokeWidth="2" /></svg></PlainButton>
      </WindowButtons>
    </MenuBar>

    <Toolbar role="toolbar" aria-label="Standard">
      <Grip $h={14} />
      {TOOLS.map((spec, i) =>
        spec === SEP ? <Divider key={i} $l={i === 2 || i === 6 ? 3 : 2} $r={i === 29 || i === 2 ? 4 : 5} /> : <ToolItem key={i} spec={spec} />
      )}
    </Toolbar>

    <MainRow>
      <h2>Main:</h2>
      <MainTools>
        <MainGrip $h={22} />
        <MainButton type="button" aria-label="Selection geometry">
          <Art at={[30, 336]} size={[40, 18]} lines={[[box(60, 346, 38, 20), "d"], ["M54 356L90 352L58 374M54 356V372"], [box(51, 352, 7, 7) + box(51, 370, 7, 7) + box(72, 352, 7, 7) + box(84, 350, 6, 6), "K"], ["M126 350v23l12-12z", "K"]]} />
        </MainButton>
        <MainButton type="button" aria-label="Marquee selection">
          <Art at={[156, 336]} size={[40, 18]} lines={[[box(178, 346, 38, 30), "d"], ["M218 346H232L228 351L234 362L228 364L224 356L218 362Z", "K"], ["M252 350v23l12-12z", "K"]]} />
        </MainButton>
        <MainButton type="button" $on aria-label="Quick selection">
          <Art at={[282, 336]} size={[40, 18]} lines={[[disc(331, 363, 9), "G"], [disc(343, 348, 6), "K"], ["M341 352L358 366C364 374 356 384 348 379L330 364M334 358L350 371"], ["M349 346L361 358C371 372 356 389 342 383L328 371"]]} />
        </MainButton>
        <MainButton type="button" $big aria-label="Arrow tool">
          <Art at={[408, 306]} size={[48, 28]} lines={[["M457 329V361L464 354L470 367L476 364L470 352H481Z", "c"], ["M528 335v23l12-12z", "K"]]} />
        </MainButton>
      </MainTools>
    </MainRow>

    <Body>
      <Toolbox aria-label="Toolbox">
        <PanelGrip $w={71} />
        <PairGrid $top>
          <ElementButton type="button" $on>
            <Art at={[0, 39]} size={[46, 27]} lines={cursorArt} />Arrow
          </ElementButton>
          <ElementButton type="button">
            <Art at={[336, 39]} size={[46, 27]} lines={[[box(379, 61, 55, 42), "d"]]} />Marquee
          </ElementButton>
        </PairGrid>
        <ElementGroup title="Ductwork" items={DUCTS} top={204} />
        <ElementGroup title="Pipework" items={PIPES} top={72} />
        {["Cabling", "Viewpoint", "Document"].map((title) => (
          <GroupHeader type="button" key={title} aria-expanded="false">
            <HeaderMark><Right /></HeaderMark>
            {title}
          </GroupHeader>
        ))}
      </Toolbox>

      <Centre>
        <TabBar>
          <GridTab type="button" aria-label="Tab overview">
            <svg width="19" height="15" viewBox="0 0 19 15"><path d="M.5.5h7v5h-7zM11.500.5h7v5h-7zM.5 8.500h7v5h-7zM11.500 8.500h7v5h-7z" fill="none" stroke={INK} /></svg>
          </GridTab>
          <Tab type="button">
            <Art at={[382, 754]} size={[24, 22]} lines={page("w")} /><span>[0. Ground Floor]</span>
          </Tab>
          <Tab type="button">
            <svg width="24" height="22" viewBox="0 0 24 22"><path d="M5 19.500h11M6.500 19l2-10h4l2 10M6 8.500h9M8.500 8V5.500h4V8M8 4.500C9 2 12 2 13 4.500M10.500 11v3M10.500 16v2" fill="none" stroke={INK} /><circle cx="19" cy="5" r="2.5" fill="#ff3b14" /></svg>
            <span>[Action Center]</span>
          </Tab>
          <Tab type="button" $on>
            <Art at={[142, 625]} size={[24, 22]} lines={persp("w")} /><span>[3D / All]</span>
            <svg width="16" height="8" viewBox="0 0 16 8"><path d="M1 1l6 6M7 1L1 7" stroke="#000" strokeWidth="2" /></svg>
          </Tab>
          <Tab type="button">
            <Art at={[171, 96]} size={[24, 22]} lines={gable("w")} /><span>[South Elevation]</span>
          </Tab>
          <TabMore type="button" aria-label="More views">
            <svg width="22" height="14" viewBox="0 0 22 14"><path d="M.5 11.500V5L5 .5 9.500 2 13.500 5v6.500zM5 .5l4 5v6M9 5.500h4.500M5 .5l8.500 4.500M16.500 8v5" fill="none" stroke={INK} /><path d="M18 8h3v2h-3zM18 11h3v2h-3z" fill={INK} /></svg>
            <Down />
          </TabMore>
        </TabBar>

        <Viewport>
          <Scene />
          <Handle $side="top" />
          <Handle $side="bottom" />
          <Handle $side="left" />
          <Handle $side="right" />
        </Viewport>

        <ViewBar role="toolbar" aria-label="Quick options">
          <ViewCell $w={72}>
            {NAV1.map((b) => <ViewButton type="button" key={b.name} aria-label={b.name}><Art unit={1} at={[1, 0]} size={[18, 18]} lines={b.art} /></ViewButton>)}
          </ViewCell>
          <ViewCell $w={51}>
            {NAV2.map((b) => <ViewButton type="button" key={b.name} aria-label={b.name}><Art unit={1} at={[0, 0]} size={[18, 18]} lines={b.art} /></ViewButton>)}
          </ViewCell>
          {OPTIONS.map((o, i) => (
            <Option type="button" key={i} $off={o.off}>
              <Art unit={1} at={[0, 0]} size={[18, 18]} lines={o.art} />
              <span>{o.text}</span>
              <Right color={o.off ? "#9a9a9a" : "#333"} />
            </Option>
          ))}
        </ViewBar>
      </Centre>

      <Navigator aria-label="Navigator">
        <PanelGrip $w={68} />
        <NavTools>
          <NavTool type="button" $on aria-label="Project map">
            <Art at={[276, 445]} size={[30, 29]} lines={[["M295 510V488L311 472L327 476L347 488V510Z"], ["M311 472L331 489M331 510V489H347M311 472L345 488"]]} />
          </NavTool>
          <Divider $l={5} $r={6} $h={19} />
          <NavTool type="button" aria-label="View map">
            <Art at={[402, 445]} size={[30, 29]} lines={[[box(421, 469, 52, 40)], ["M427 501V487L438 476L450 478L466 489V501ZM438 476L452 489V501M452 489H466M440 476L464 488"]]} />
          </NavTool>
          <NavTool type="button" aria-label="Layout book">
            <Art at={[492, 445]} size={[30, 29]} lines={[["M527 474H563V508H511V490L527 465ZM527 474V489L511 508M545 508V496H563M545 502H563"]]} />
          </NavTool>
          <NavTool type="button" aria-label="Publisher sets">
            <Art at={[582, 445]} size={[26, 29]} lines={[["M641 470H646V511H614V506M646 476H650V515H620V511"], [box(607, 467, 33, 37)], ["M604 478H630V473H604Z"]]} />
          </NavTool>
          <NavMenu type="button" aria-label="Navigator options">
            <svg width="12" height="11" viewBox="0 0 12 11"><path d="M0 .5h12M0 5.500h12M0 10.500h12" stroke={INK} /></svg>
            <Right />
          </NavMenu>
        </NavTools>
        <SearchBox type="text" placeholder="Search Project Map" aria-label="Search Project Map" />
        <Tree>
          {NODES.map((n) => (
            <TreeRow key={n.label} $level={n.level} $on={n.on}>
              <Expander>
                {n.open && <svg width="9" height="6" viewBox="0 0 9 6"><path d="M1 1l3.500 3.500L8 1" fill="none" stroke="#3c3c3c" strokeWidth="2" /></svg>}
                {n.closed && <svg width="6" height="9" viewBox="0 0 6 9"><path d="M1 1l3.500 3.500L1 8" fill="none" stroke="#a0a0a0" strokeWidth="2" /></svg>}
              </Expander>
              <Art at={n.at} size={[22, 22]} lines={n.art} />
              <TreeLabel>{n.label}</TreeLabel>
            </TreeRow>
          ))}
        </Tree>
        <ScrollTrack>
          <svg width="6" height="9" viewBox="0 0 6 9"><path d="M5 1L1.500 4.500 5 8" fill="none" stroke="#444" strokeWidth="2" /></svg>
          <ScrollThumb />
          <svg width="6" height="9" viewBox="0 0 6 9"><path d="M1 1l3.500 3.500L1 8" fill="none" stroke="#444" strokeWidth="2" /></svg>
        </ScrollTrack>
        <NavActions>
          <PlainButton type="button" aria-label="Add"><Art at={[67, 128]} size={[30, 30]} lines={[[disc(112, 173, 18), "p"], ["M102 173H122M112 163V183", "p"]]} /></PlainButton>
          <PlainButton type="button" aria-label="Edit"><Art at={[157, 128]} size={[30, 30]} lines={[[box(182, 158, 39, 30), "b"], [box(182, 158, 39, 5) + box(188, 168, 4, 3) + box(196, 168, 18, 3) + box(188, 177, 4, 3) + box(196, 177, 18, 3), "B"]]} /></PlainButton>
          <PlainButton type="button" aria-label="Delete"><Art at={[247, 128]} size={[30, 30]} lines={[["M273 154L309 194M309 154L273 194", "r"]]} /></PlainButton>
        </NavActions>
        <PropertyHeader type="button" $h={22} aria-expanded="true">
          <HeaderMark><Down color="#333" /></HeaderMark>
          <TreeLabel>Properties</TreeLabel>
        </PropertyHeader>
        <PropertyRow>
          <Art at={[66, 300]} size={[20, 20]} lines={[["M79 320L98 317V346L79 341ZM98 317L110 322V338L98 346"]]} />
          Generic Perspective
        </PropertyRow>
        <SettingsButton type="button">Settings...</SettingsButton>
      </Navigator>
    </Body>

    <StatusBar>
      <p>Click an Element or Draw a Selection Area. Press and Hold Ctrl+Shift to Toggle Element/Sub-Element Selection.</p>
      <svg width="16" height="14" viewBox="0 0 16 14" aria-hidden="true"><path d="M.5 10V1.500h13M4.500 5h11v8.500h-11zM0 1h14" fill="none" stroke={INK} /><path d="M4 4h12v2H4z" fill={INK} /></svg>
      <Brand>GRAPHISOFT ID</Brand>
    </StatusBar>
  </Frame>
);

export default App;
